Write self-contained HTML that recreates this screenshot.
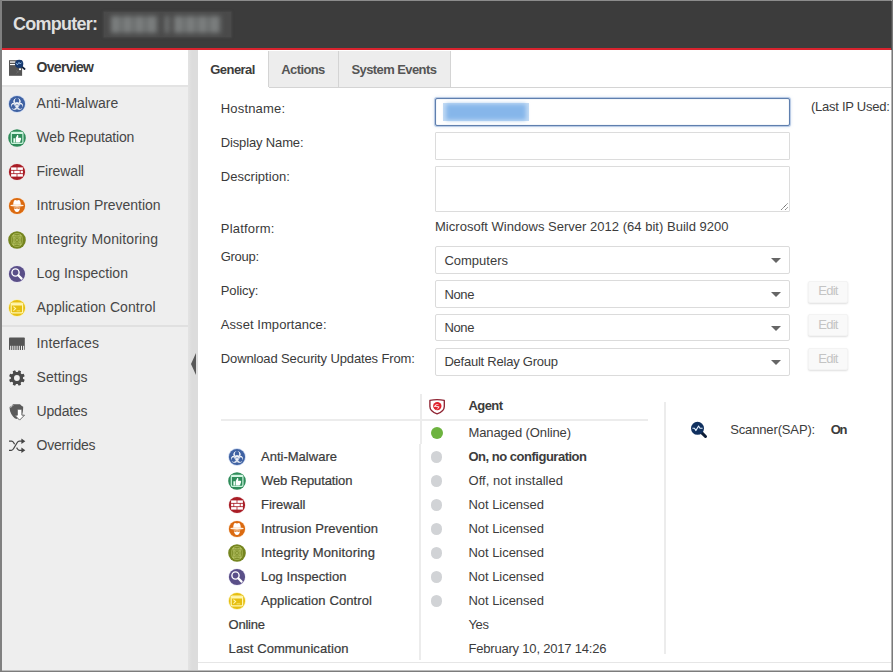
<!DOCTYPE html>
<html lang="en">
<head>
<meta charset="utf-8">
<title>Computer</title>
<style>
*{box-sizing:border-box;margin:0;padding:0}
html,body{width:893px;height:672px;overflow:hidden;background:#fff}
body{font-family:"Liberation Sans",sans-serif;position:relative;color:#333}
.a{position:absolute}
.t{position:absolute;white-space:nowrap;line-height:1;}
#hdr{left:0;top:0;width:893px;height:48px;background:#3c3c3c}
#red{left:0;top:48px;width:893px;height:2px;background:#d9232e}
#side{left:0;top:50px;width:188px;height:622px;background:#eee}
#ov{left:0;top:50px;width:188px;height:35px;background:#fff}
#ovl{left:0;top:85px;width:188px;height:2px;background:#e3e3e3}
#sep2{left:0;top:325px;width:188px;height:2px;background:#e0e0e0}
#split{left:188px;top:50px;width:10px;height:622px;background:linear-gradient(90deg,#e3e3e3 0,#dcdcdc 4px,#dcdcdc 100%)}
#tabline{left:198px;top:87px;width:695px;height:1px;background:#d4d4d4}
.tab{position:absolute;top:51px;height:36px;background:#ededed;border-right:1px solid #d4d4d4}
.inp{position:absolute;left:435px;width:355px;background:#fff;border:1px solid #dcdcdc;border-radius:1px}
.sel{position:absolute;left:435px;width:355px;height:27px;background:#fff;border:1px solid #dbdbdb;border-radius:2px}
.sel:after{content:"";position:absolute;right:8px;top:11px;border-left:5px solid transparent;border-right:5px solid transparent;border-top:5px solid #666}
.btn{position:absolute;left:808px;width:40px;height:22px;background:#f9f9f9;border:1px solid #f3f3f3;border-radius:2px;box-shadow:0 1px 2px rgba(0,0,0,.13)}
.dot{position:absolute;left:430.5px;width:11.5px;height:11.5px;border-radius:50%;background:#d1d3d6}
.ic{position:absolute}
#frame{left:0;top:0;width:893px;height:672px;border-left:2px solid #7a7a7a;border-right:2px solid #7a7a7a;border-bottom:2px solid #6e6e6e;border-top:1px solid #8a8a8a;pointer-events:none}
</style>
</head>
<body>
<div class="a" id="hdr"></div>
<div class="a" id="red"></div>
<div class="a" id="side"></div>
<div class="a" id="ov"></div>
<div class="a" id="ovl"></div>
<div class="a" id="sep2"></div>
<div class="a" id="split"></div>
<div class="a" style="left:190.8px;top:353px;width:0;height:0;border-top:11px solid transparent;border-bottom:11px solid transparent;border-right:5.5px solid #585858"></div>
<!-- blurred name -->
<div class="a" style="left:104px;top:12px;width:127px;height:25px;background:#4a4a4a;box-shadow:0 0 2px 1px #474747"></div>
<div class="a" style="left:111px;top:16px;width:112px;height:17px;filter:blur(2.4px)">
<div class="a" style="left:0;top:0;width:47px;height:17px;background:repeating-linear-gradient(90deg,#7b7e7e 0 9px,#626565 9px 12px)"></div>
<div class="a" style="left:54px;top:0;width:4px;height:17px;background:#787b7b"></div>
<div class="a" style="left:63px;top:0;width:47px;height:17px;background:repeating-linear-gradient(90deg,#7b7e7e 0 9px,#626565 9px 12px)"></div>
</div>
<!-- tabs -->
<div class="tab" style="left:269px;width:70px"></div>
<div class="tab" style="left:339px;width:112px"></div>
<div class="a" style="left:268px;top:51px;width:1px;height:36px;background:#d4d4d4"></div>
<div class="a" id="tabline"></div>
<div class="a" style="left:198px;top:87px;width:71px;height:1px;background:#fff"></div>
<!-- inputs -->
<div class="inp" style="top:98px;height:28px;border:1px solid #5f7fae;border-radius:2px;box-shadow:0 0 0 1px rgba(150,175,215,.55),0 0 3px 1px rgba(150,180,220,.35),inset 0 0 1px rgba(95,127,174,.6)"></div>
<div class="a" style="left:443px;top:103px;width:86px;height:18px;background:#c4dcf5"></div>
<div class="a" style="left:446px;top:104px;width:80px;height:16px;filter:blur(2px);background:#86b6ea"></div>
<div class="inp" style="top:132px;height:28px"></div>
<div class="inp" style="top:166px;height:46px"></div>
<svg class="a" style="left:779px;top:201px" width="9" height="9" viewBox="0 0 9 9"><path d="M2.3 8.700L8.800 2.200M6.300 8.700L8.800 6.200" stroke="#444" stroke-width=".95" stroke-dasharray="1.300 .550" fill="none"/></svg>
<div class="sel" style="top:246px;height:28px"></div>
<div class="sel" style="top:280px;height:28px"></div>
<div class="sel" style="top:314px;height:27px"></div>
<div class="sel" style="top:348px;height:28px"></div>
<div class="btn" style="top:281px"></div>
<div class="btn" style="top:314px"></div>
<div class="btn" style="top:348px"></div>
<!-- status table lines -->
<div class="a" style="left:221px;top:419px;width:427px;height:2px;background:#ececec"></div>
<div class="a" style="left:420px;top:394px;width:2px;height:50px;background:#ececec"></div><div class="a" style="left:419px;top:444px;width:2px;height:216px;background:#ececec"></div>
<div class="a" style="left:664px;top:402px;width:2px;height:252px;background:#ececec"></div>
<div class="a" style="left:198px;top:662px;width:695px;height:1px;background:#e6e6e6"></div>
<div class="dot" style="top:427.4px;left:430.8px;width:12px;height:12px;background:#6db33f"></div>
<div class="dot" style="top:451px"></div>
<div class="dot" style="top:475px"></div>
<div class="dot" style="top:499px"></div>
<div class="dot" style="top:523px"></div>
<div class="dot" style="top:547px"></div>
<div class="dot" style="top:571px"></div>
<div class="dot" style="top:595px"></div>
<svg class="ic" style="left:4px;top:54px" width="28" height="28" viewBox="4 54 28 28"><rect x="9" y="60.2" width="13.1" height="15.6" fill="#555"/><rect x="10" y="61.3" width="5.6" height="1.5" fill="#e9e9e9"/><rect x="10" y="64" width="5" height="1.1" fill="#fff"/><rect x="19" y="68.4" width="2" height="1.7" fill="#fff"/><path d="M16.2 70.5l2 1.6M16.2 73.5l3.5-2.6" stroke="#6a6a6a" stroke-width=".8"/><path d="M21.8 66.6L24.6 69" stroke="#15233c" stroke-width="1.8" stroke-linecap="round"/><circle cx="19.2" cy="63.9" r="4.1" fill="#173a70"/><path d="M16.2 63.2l1.2 1.6l1.6-2.4l1.2 1.6l1.4-1.4" fill="none" stroke="#9cc8f5" stroke-width=".9"/></svg>
<svg class="ic" style="left:6.9px;top:93.5px" width="20" height="20" viewBox="-10 -10 20 20"><circle r="8.9" fill="#d3def3"/><circle r="8.1" fill="#3f62a3"/><clipPath id="c1"><circle r="8.1"/></clipPath><g clip-path="url(#c1)"><circle cx="0.00" cy="-1.99" r="3.67" fill="#fff"/><circle cx="2.33" cy="2.05" r="3.67" fill="#fff"/><circle cx="-2.33" cy="2.05" r="3.67" fill="#fff"/><circle cx="0.00" cy="-3.10" r="2.35" fill="#3f62a3"/><path d="M0.00 -3.22L0.00 -6.65" stroke="#3f62a3" stroke-width="1.59"/><circle cx="3.29" cy="2.60" r="2.35" fill="#3f62a3"/><path d="M3.39 2.66L6.37 4.37" stroke="#3f62a3" stroke-width="1.59"/><circle cx="-3.29" cy="2.60" r="2.35" fill="#3f62a3"/><path d="M-3.39 2.66L-6.37 4.37" stroke="#3f62a3" stroke-width="1.59"/><path d="M0.00 1.93L0.00 8.05" stroke="#3f62a3" stroke-width="0.45"/><path d="M1.06 0.09L6.37 -2.97" stroke="#3f62a3" stroke-width="0.45"/><path d="M-1.06 0.09L-6.37 -2.98" stroke="#3f62a3" stroke-width="0.45"/><circle cy="0.7" r="2.21" fill="none" stroke="#fff" stroke-width="0.88"/><circle cy="0.7" r="0.69" fill="#3f62a3"/></g></svg>
<svg class="ic" style="left:6.9px;top:128.0px" width="20" height="20" viewBox="-10 -10 20 20"><circle r="8.8" fill="#2f8c5a"/><rect x="-5.7" y="-5.6" width="11.6" height="11" rx="1.3" fill="none" stroke="#c9f3dc" stroke-width="1.2"/><rect x="-5.7" y="-5.8" width="11.6" height="1.700" rx=".6" fill="#d4f7e3"/><path d="M-3.6 0.2h1.6v4.2h-1.6z" fill="#e9fff2"/><path d="M-1.4 0.2L0.3 -2.9c0.9 0 1.3 0.7 1.0 1.6L1.0 -0.2h2.2c0.8 0 1.1 0.6 0.9 1.2L3.2 3.7c-0.2 0.5-0.6 0.7-1.1 0.7H-1.4z" fill="#fff"/></svg>
<svg class="ic" style="left:6.9px;top:162.0px" width="20" height="20" viewBox="-10 -10 20 20"><circle r="8.7" fill="#f3d9db" opacity=".6"/><circle r="8.1" fill="#a91d26"/><g fill="#fff"><rect x="-5.9" y="-4.6" width="5.5" height="2.5"/><rect x="0.4" y="-4.6" width="5.5" height="2.5"/><rect x="-5.9" y="-1.25" width="2.3" height="2.5"/><rect x="-2.8" y="-1.25" width="5.6" height="2.5"/><rect x="3.6" y="-1.25" width="2.3" height="2.5"/><rect x="-5.9" y="2.1" width="5.5" height="2.5"/><rect x="0.4" y="2.1" width="5.5" height="2.5"/></g></svg>
<svg class="ic" style="left:6.9px;top:196.0px" width="20" height="20" viewBox="-10 -10 20 20"><circle r="8.7" fill="#fde3c8" opacity=".7"/><circle r="8.1" fill="#db6a10"/><path d="M-3.8 -1.2c0.100-2.800 0.900-4.700 2.000-4.700c0.700 0 1.100 0.500 1.800 0.500s1.100-0.500 1.800-0.500c1.100 0 1.900 1.900 2.000 4.700z" fill="#fff"/><ellipse cx="0" cy="-0.500" rx="6.700" ry="1.150" fill="#fff3e4"/><path d="M-3.2 1.000h6.400c0 2.900-1.300 5.000-3.200 5.000s-3.200-2.100-3.200-5.000z" fill="#fff"/><path d="M-3.1 1.300h6.200v1.300c-1.000 0.500-2.000 0.500-3.100 0c-1.100 0.500-2.100 0.500-3.100 0z" fill="#db6a10" opacity=".8"/></svg>
<svg class="ic" style="left:6.9px;top:230.0px" width="20" height="20" viewBox="-10 -10 20 20"><circle r="8.8" fill="#75851f"/><g fill="none" stroke="#ccd97c" stroke-width="0.6"><rect x="-5.200" y="-6.300" width="10.400" height="12.600" rx="4.200" ry="4.600"/><path d="M-4.0 -5.0Q0 -3.3 4.0 -5.0Q2.3 0 4.0 5.0Q0 3.3 -4.0 5.0Q-2.3 0 -4.0 -5.0z"/><path d="M-2.5 -3.3Q0 -2.3 2.5 -3.3Q1.5 0 2.5 3.3Q0 2.3 -2.5 3.3Q-1.5 0 -2.5 -3.3z"/></g><path d="M-1.800 -2.400L1.800 2.400M1.800 -2.400L-1.800 2.400" stroke="#ccd97c" stroke-width=".55"/></svg>
<svg class="ic" style="left:6.9px;top:264.0px" width="20" height="20" viewBox="-10 -10 20 20"><circle r="8.7" fill="#e4e0f3" opacity=".7"/><circle r="8.1" fill="#5a4f88"/><circle cx="-1.5" cy="-1.5" r="3.6" fill="none" stroke="#fff" stroke-width="1.4"/><path d="M1.3 1.3L4.6 4.6" stroke="#fff" stroke-width="2.2" stroke-linecap="round"/></svg>
<svg class="ic" style="left:6.9px;top:298.0px" width="20" height="20" viewBox="-10 -10 20 20"><circle r="8.8" fill="#fbf0a8" opacity=".8"/><circle r="8.1" fill="#e6be10"/><rect x="-5.8" y="-4.8" width="11.4" height="9.6" rx="1" fill="none" stroke="#fff6b0" stroke-width="1.2"/><rect x="-5.8" y="-4.8" width="11.4" height="2.2" rx=".8" fill="#fff6b0"/><path d="M-3.6 -1.3L-1.4 0.6L-3.6 2.6" fill="none" stroke="#fff6b0" stroke-width="1.1"/><path d="M-0.4 2.8H3.2" stroke="#f7e36a" stroke-width="1"/></svg>
<svg class="ic" style="left:4px;top:330px" width="28" height="28" viewBox="4 330 28 28"><rect x="9" y="337.5" width="15.8" height="12.5" rx=".8" fill="#555"/><rect x="10.2" y="345.8" width="1" height="4.2" fill="#f4f4f4"/><rect x="12.3" y="345.8" width="1" height="4.2" fill="#f4f4f4"/><rect x="14.4" y="345.8" width="1" height="4.2" fill="#f4f4f4"/><rect x="16.6" y="345.8" width="1" height="4.2" fill="#f4f4f4"/><rect x="18.8" y="345.8" width="1" height="4.2" fill="#f4f4f4"/><rect x="21.0" y="345.8" width="1" height="4.2" fill="#f4f4f4"/><rect x="23.1" y="345.8" width="1" height="4.2" fill="#f4f4f4"/></svg>
<svg class="ic" style="left:4px;top:364px" width="28" height="28" viewBox="4 364 28 28"><path d="M22.95 378.80L24.68 379.87L23.72 382.18L21.74 381.71L20.61 382.84L21.08 384.82L18.77 385.78L17.70 384.05L16.10 384.05L15.03 385.78L12.72 384.82L13.19 382.84L12.06 381.71L10.08 382.18L9.12 379.87L10.85 378.80L10.85 377.20L9.12 376.13L10.08 373.82L12.06 374.29L13.19 373.16L12.72 371.18L15.03 370.22L16.10 371.95L17.70 371.95L18.77 370.22L21.08 371.18L20.61 373.16L21.74 374.29L23.72 373.82L24.68 376.13L22.95 377.20z" fill="#4a4a4a"/><circle cx="16.9" cy="378" r="5.8" fill="#4a4a4a"/><circle cx="16.9" cy="378" r="2.9" fill="#f2f2f2"/></svg>
<svg class="ic" style="left:4px;top:398px" width="28" height="28" viewBox="4 398 28 28"><path d="M13 404.2h7c1 1.2 2 2 3.2 2.6c0 4-0.6 7-2.4 9.2l-4.3 3c-2.2-0.8-5-3.6-6.3-7.6c-0.5-1.6-0.6-3-0.6-4.4c1.4-0.5 2.4-1.4 3.4-2.8z" fill="#5a5a5a"/><path d="M10.3 407.5c1.3-0.6 2.2-1.4 3-2.4" stroke="#ddd" stroke-width=".8" fill="none"/><path d="M17.3 409.2h4.6v6h2.6l-4.9 4.9l-4.9-4.9h2.6z" fill="#fff" stroke="#5a5a5a" stroke-width=".9"/></svg>
<svg class="ic" style="left:4px;top:432px" width="28" height="28" viewBox="4 432 28 28"><g fill="none" stroke="#444" stroke-width="1.25"><path d="M9 441.2h2.6c1 0 1.5 0.5 2.1 1.5l0.9 1.5"/><path d="M16.6 447.6l0.9 1.4c0.6 0.9 1.1 1.3 2.1 1.3h2.4"/><path d="M9 450.3h2.3c1 0 1.6-0.5 2.2-1.5l3.6-6.1c0.6-1 1.2-1.5 2.2-1.5h2.7"/></g><path d="M21.4 438.4l3.9 2.8l-3.9 2.8z" fill="#444"/><path d="M21.4 447.5l3.9 2.8l-3.9 2.8z" fill="#444"/></svg>
<svg class="ic" style="left:423px;top:392px" width="28" height="28" viewBox="423 392 28 28"><path d="M429.9 400.4c4.600-1.000 9.800-1.000 14.400 0v6.000c0 3.600-3.000 5.900-7.200 7.400c-4.200-1.500-7.200-3.800-7.200-7.400z" fill="#fff" stroke="#8f2433" stroke-width="1.35" stroke-linejoin="round"/><circle cx="437.3" cy="406.1" r="4.2" fill="#e0212c"/><path d="M433.9 406.9c0.700-2.300 3.000-3.400 5.200-2.600c-1.700 0.100-2.900 0.900-3.500 2.100c1.400-0.700 2.900-0.600 3.900 0.200c-0.300 1.700-1.800 2.900-3.600 2.900c1.300-0.500 2.000-1.300 2.200-2.200c-1.500-0.400-2.900-0.300-4.200-0.400z" fill="#fff" opacity=".85"/></svg>
<svg class="ic" style="left:685px;top:416px" width="28" height="28" viewBox="685 416 28 28"><path d="M701.6 432.600L705.5 436.5" stroke="#0d1d36" stroke-width="3" stroke-linecap="round"/><circle cx="697.5" cy="428.3" r="6.5" fill="#10305f"/><path d="M692.4 428.300h2.100l1.300 2.300l2.800-4.600l1.400 2.300h2.600" fill="none" stroke="#e4f1ff" stroke-width="1.1" stroke-linejoin="round"/></svg>
<svg class="ic" style="left:227.0px;top:446.6px" width="20" height="20" viewBox="-10 -10 20 20"><circle r="8.9" fill="#d3def3"/><circle r="8.1" fill="#3f62a3"/><clipPath id="c8"><circle r="8.1"/></clipPath><g clip-path="url(#c8)"><circle cx="0.00" cy="-1.99" r="3.67" fill="#fff"/><circle cx="2.33" cy="2.05" r="3.67" fill="#fff"/><circle cx="-2.33" cy="2.05" r="3.67" fill="#fff"/><circle cx="0.00" cy="-3.10" r="2.35" fill="#3f62a3"/><path d="M0.00 -3.22L0.00 -6.65" stroke="#3f62a3" stroke-width="1.59"/><circle cx="3.29" cy="2.60" r="2.35" fill="#3f62a3"/><path d="M3.39 2.66L6.37 4.37" stroke="#3f62a3" stroke-width="1.59"/><circle cx="-3.29" cy="2.60" r="2.35" fill="#3f62a3"/><path d="M-3.39 2.66L-6.37 4.37" stroke="#3f62a3" stroke-width="1.59"/><path d="M0.00 1.93L0.00 8.05" stroke="#3f62a3" stroke-width="0.45"/><path d="M1.06 0.09L6.37 -2.97" stroke="#3f62a3" stroke-width="0.45"/><path d="M-1.06 0.09L-6.37 -2.98" stroke="#3f62a3" stroke-width="0.45"/><circle cy="0.7" r="2.21" fill="none" stroke="#fff" stroke-width="0.88"/><circle cy="0.7" r="0.69" fill="#3f62a3"/></g></svg>
<svg class="ic" style="left:227.0px;top:470.6px" width="20" height="20" viewBox="-10 -10 20 20"><circle r="8.8" fill="#2f8c5a"/><rect x="-5.7" y="-5.6" width="11.6" height="11" rx="1.3" fill="none" stroke="#c9f3dc" stroke-width="1.2"/><rect x="-5.7" y="-5.8" width="11.6" height="1.700" rx=".6" fill="#d4f7e3"/><path d="M-3.6 0.2h1.6v4.2h-1.6z" fill="#e9fff2"/><path d="M-1.4 0.2L0.3 -2.9c0.9 0 1.3 0.7 1.0 1.6L1.0 -0.2h2.2c0.8 0 1.1 0.6 0.9 1.2L3.2 3.7c-0.2 0.5-0.6 0.7-1.1 0.7H-1.4z" fill="#fff"/></svg>
<svg class="ic" style="left:227.0px;top:494.6px" width="20" height="20" viewBox="-10 -10 20 20"><circle r="8.7" fill="#f3d9db" opacity=".6"/><circle r="8.1" fill="#a91d26"/><g fill="#fff"><rect x="-5.9" y="-4.6" width="5.5" height="2.5"/><rect x="0.4" y="-4.6" width="5.5" height="2.5"/><rect x="-5.9" y="-1.25" width="2.3" height="2.5"/><rect x="-2.8" y="-1.25" width="5.6" height="2.5"/><rect x="3.6" y="-1.25" width="2.3" height="2.5"/><rect x="-5.9" y="2.1" width="5.5" height="2.5"/><rect x="0.4" y="2.1" width="5.5" height="2.5"/></g></svg>
<svg class="ic" style="left:227.0px;top:518.6px" width="20" height="20" viewBox="-10 -10 20 20"><circle r="8.7" fill="#fde3c8" opacity=".7"/><circle r="8.1" fill="#db6a10"/><path d="M-3.8 -1.2c0.100-2.800 0.900-4.700 2.000-4.700c0.700 0 1.100 0.500 1.800 0.500s1.100-0.500 1.800-0.500c1.100 0 1.900 1.900 2.000 4.700z" fill="#fff"/><ellipse cx="0" cy="-0.500" rx="6.700" ry="1.150" fill="#fff3e4"/><path d="M-3.2 1.000h6.400c0 2.900-1.300 5.000-3.200 5.000s-3.200-2.100-3.200-5.000z" fill="#fff"/><path d="M-3.1 1.300h6.200v1.300c-1.000 0.500-2.000 0.500-3.100 0c-1.100 0.500-2.100 0.500-3.100 0z" fill="#db6a10" opacity=".8"/></svg>
<svg class="ic" style="left:227.0px;top:542.6px" width="20" height="20" viewBox="-10 -10 20 20"><circle r="8.8" fill="#75851f"/><g fill="none" stroke="#ccd97c" stroke-width="0.6"><rect x="-5.200" y="-6.300" width="10.400" height="12.600" rx="4.200" ry="4.600"/><path d="M-4.0 -5.0Q0 -3.3 4.0 -5.0Q2.3 0 4.0 5.0Q0 3.3 -4.0 5.0Q-2.3 0 -4.0 -5.0z"/><path d="M-2.5 -3.3Q0 -2.3 2.5 -3.3Q1.5 0 2.5 3.3Q0 2.3 -2.5 3.3Q-1.5 0 -2.5 -3.3z"/></g><path d="M-1.800 -2.400L1.800 2.400M1.800 -2.400L-1.800 2.400" stroke="#ccd97c" stroke-width=".55"/></svg>
<svg class="ic" style="left:227.0px;top:566.6px" width="20" height="20" viewBox="-10 -10 20 20"><circle r="8.7" fill="#e4e0f3" opacity=".7"/><circle r="8.1" fill="#5a4f88"/><circle cx="-1.5" cy="-1.5" r="3.6" fill="none" stroke="#fff" stroke-width="1.4"/><path d="M1.3 1.3L4.6 4.6" stroke="#fff" stroke-width="2.2" stroke-linecap="round"/></svg>
<svg class="ic" style="left:227.0px;top:590.6px" width="20" height="20" viewBox="-10 -10 20 20"><circle r="8.8" fill="#fbf0a8" opacity=".8"/><circle r="8.1" fill="#e6be10"/><rect x="-5.8" y="-4.8" width="11.4" height="9.6" rx="1" fill="none" stroke="#fff6b0" stroke-width="1.2"/><rect x="-5.8" y="-4.8" width="11.4" height="2.2" rx=".8" fill="#fff6b0"/><path d="M-3.6 -1.3L-1.4 0.6L-3.6 2.6" fill="none" stroke="#fff6b0" stroke-width="1.1"/><path d="M-0.4 2.8H3.2" stroke="#f7e36a" stroke-width="1"/></svg>
<div class="t" style="left:13.0px;top:14.8px;font-size:18px;font-weight:700;color:#dfdfdf;letter-spacing:-0.75px;">Computer:</div>
<div class="t" style="left:36.6px;top:60.1px;font-size:14px;font-weight:700;color:#3a3a3a;letter-spacing:-0.70px;">Overview</div>
<div class="t" style="left:36.6px;top:96.1px;font-size:14px;font-weight:400;color:#474747;letter-spacing:-0.00px;">Anti-Malware</div>
<div class="t" style="left:36.6px;top:130.1px;font-size:14px;font-weight:400;color:#474747;letter-spacing:-0.18px;">Web Reputation</div>
<div class="t" style="left:36.6px;top:164.1px;font-size:14px;font-weight:400;color:#474747;letter-spacing:-0.12px;">Firewall</div>
<div class="t" style="left:36.6px;top:198.1px;font-size:14px;font-weight:400;color:#474747;letter-spacing:-0.03px;">Intrusion Prevention</div>
<div class="t" style="left:36.6px;top:232.1px;font-size:14px;font-weight:400;color:#474747;letter-spacing:0.12px;">Integrity Monitoring</div>
<div class="t" style="left:36.6px;top:266.1px;font-size:14px;font-weight:400;color:#474747;letter-spacing:0.02px;">Log Inspection</div>
<div class="t" style="left:36.6px;top:300.1px;font-size:14px;font-weight:400;color:#474747;letter-spacing:0.08px;">Application Control</div>
<div class="t" style="left:36.6px;top:336.1px;font-size:14px;font-weight:400;color:#474747;letter-spacing:0.10px;">Interfaces</div>
<div class="t" style="left:36.6px;top:370.1px;font-size:14px;font-weight:400;color:#474747;letter-spacing:0.04px;">Settings</div>
<div class="t" style="left:36.6px;top:404.1px;font-size:14px;font-weight:400;color:#474747;letter-spacing:-0.21px;">Updates</div>
<div class="t" style="left:36.6px;top:438.1px;font-size:14px;font-weight:400;color:#474747;letter-spacing:-0.22px;">Overrides</div>
<div class="t" style="left:210.3px;top:63.0px;font-size:13px;font-weight:700;color:#3c3c3c;letter-spacing:-0.55px;">General</div>
<div class="t" style="left:281.3px;top:63.0px;font-size:13px;font-weight:700;color:#555;letter-spacing:-0.61px;">Actions</div>
<div class="t" style="left:351.5px;top:63.0px;font-size:13px;font-weight:700;color:#555;letter-spacing:-0.59px;">System Events</div>
<div class="t" style="left:220.8px;top:102.0px;font-size:13px;font-weight:400;color:#3a3a3a;letter-spacing:0.17px;">Hostname:</div>
<div class="t" style="left:220.8px;top:136.0px;font-size:13px;font-weight:400;color:#3a3a3a;letter-spacing:-0.15px;">Display Name:</div>
<div class="t" style="left:220.8px;top:170.0px;font-size:13px;font-weight:400;color:#3a3a3a;letter-spacing:0.03px;">Description:</div>
<div class="t" style="left:220.8px;top:222.0px;font-size:13px;font-weight:400;color:#3a3a3a;letter-spacing:0.19px;">Platform:</div>
<div class="t" style="left:220.8px;top:250.0px;font-size:13px;font-weight:400;color:#3a3a3a;letter-spacing:-0.31px;">Group:</div>
<div class="t" style="left:220.8px;top:284.0px;font-size:13px;font-weight:400;color:#3a3a3a;letter-spacing:-0.10px;">Policy:</div>
<div class="t" style="left:220.8px;top:318.0px;font-size:13px;font-weight:400;color:#3a3a3a;letter-spacing:0.06px;">Asset Importance:</div>
<div class="t" style="left:220.8px;top:352.0px;font-size:13px;font-weight:400;color:#3a3a3a;letter-spacing:-0.13px;">Download Security Updates From:</div>
<div class="t" style="left:435.0px;top:219.5px;font-size:13px;font-weight:400;color:#3c3c3c;letter-spacing:0.02px;">Microsoft Windows Server 2012 (64 bit) Build 9200</div>
<div class="t" style="left:811.0px;top:100.0px;font-size:13px;font-weight:400;color:#3c3c3c;letter-spacing:-0.26px;">(Last IP Used:</div>
<div class="t" style="left:444.4px;top:253.5px;font-size:13px;font-weight:400;color:#3c3c3c;letter-spacing:0.00px;">Computers</div>
<div class="t" style="left:444.4px;top:287.5px;font-size:13px;font-weight:400;color:#3c3c3c;letter-spacing:-0.33px;">None</div>
<div class="t" style="left:444.4px;top:320.5px;font-size:13px;font-weight:400;color:#3c3c3c;letter-spacing:-0.33px;">None</div>
<div class="t" style="left:444.4px;top:354.5px;font-size:13px;font-weight:400;color:#3c3c3c;letter-spacing:-0.23px;">Default Relay Group</div>
<div class="t" style="left:818.3px;top:284.0px;font-size:13px;font-weight:400;color:#c4c4c4;letter-spacing:-0.77px;">Edit</div>
<div class="t" style="left:818.3px;top:317.5px;font-size:13px;font-weight:400;color:#c4c4c4;letter-spacing:-0.77px;">Edit</div>
<div class="t" style="left:818.3px;top:351.5px;font-size:13px;font-weight:400;color:#c4c4c4;letter-spacing:-0.77px;">Edit</div>
<div class="t" style="left:468.5px;top:399.0px;font-size:13px;font-weight:700;color:#3c3c3c;letter-spacing:-0.59px;">Agent</div>
<div class="t" style="left:468.5px;top:426.2px;font-size:13px;font-weight:400;color:#3c3c3c;letter-spacing:-0.10px;">Managed (Online)</div>
<div class="t" style="left:261.0px;top:450.0px;font-size:13px;font-weight:400;color:#3c3c3c;letter-spacing:0.01px;-webkit-text-stroke:0.22px #3a3a3a;">Anti-Malware</div>
<div class="t" style="left:468.5px;top:450.0px;font-size:13px;font-weight:700;color:#3c3c3c;letter-spacing:-0.49px;">On, no configuration</div>
<div class="t" style="left:261.0px;top:474.0px;font-size:13px;font-weight:400;color:#3c3c3c;letter-spacing:-0.12px;-webkit-text-stroke:0.22px #3a3a3a;">Web Reputation</div>
<div class="t" style="left:468.5px;top:474.0px;font-size:13px;font-weight:400;color:#3c3c3c;letter-spacing:0.05px;">Off, not installed</div>
<div class="t" style="left:261.0px;top:498.0px;font-size:13px;font-weight:400;color:#3c3c3c;letter-spacing:-0.04px;-webkit-text-stroke:0.22px #3a3a3a;">Firewall</div>
<div class="t" style="left:468.5px;top:498.0px;font-size:13px;font-weight:400;color:#3c3c3c;letter-spacing:-0.04px;">Not Licensed</div>
<div class="t" style="left:261.0px;top:522.0px;font-size:13px;font-weight:400;color:#3c3c3c;letter-spacing:0.07px;-webkit-text-stroke:0.22px #3a3a3a;">Intrusion Prevention</div>
<div class="t" style="left:468.5px;top:522.0px;font-size:13px;font-weight:400;color:#3c3c3c;letter-spacing:-0.04px;">Not Licensed</div>
<div class="t" style="left:261.0px;top:546.0px;font-size:13px;font-weight:400;color:#3c3c3c;letter-spacing:0.18px;-webkit-text-stroke:0.22px #3a3a3a;">Integrity Monitoring</div>
<div class="t" style="left:468.5px;top:546.0px;font-size:13px;font-weight:400;color:#3c3c3c;letter-spacing:-0.04px;">Not Licensed</div>
<div class="t" style="left:261.0px;top:570.0px;font-size:13px;font-weight:400;color:#3c3c3c;letter-spacing:0.07px;-webkit-text-stroke:0.22px #3a3a3a;">Log Inspection</div>
<div class="t" style="left:468.5px;top:570.0px;font-size:13px;font-weight:400;color:#3c3c3c;letter-spacing:-0.04px;">Not Licensed</div>
<div class="t" style="left:261.0px;top:594.0px;font-size:13px;font-weight:400;color:#3c3c3c;letter-spacing:0.10px;-webkit-text-stroke:0.22px #3a3a3a;">Application Control</div>
<div class="t" style="left:468.5px;top:594.0px;font-size:13px;font-weight:400;color:#3c3c3c;letter-spacing:-0.04px;">Not Licensed</div>
<div class="t" style="left:228.6px;top:618.0px;font-size:13px;font-weight:400;color:#3c3c3c;letter-spacing:-0.24px;-webkit-text-stroke:0.22px #3a3a3a;">Online</div>
<div class="t" style="left:228.6px;top:642.0px;font-size:13px;font-weight:400;color:#3c3c3c;letter-spacing:0.08px;-webkit-text-stroke:0.22px #3a3a3a;">Last Communication</div>
<div class="t" style="left:468.5px;top:618.0px;font-size:13px;font-weight:400;color:#3c3c3c;letter-spacing:-0.36px;">Yes</div>
<div class="t" style="left:468.5px;top:642.0px;font-size:13px;font-weight:400;color:#3c3c3c;letter-spacing:-0.20px;">February 10, 2017 14:26</div>
<div class="t" style="left:730.2px;top:422.6px;font-size:13px;font-weight:400;color:#3c3c3c;letter-spacing:-0.14px;">Scanner(SAP):</div>
<div class="t" style="left:830.7px;top:422.6px;font-size:13px;font-weight:700;color:#3c3c3c;letter-spacing:-1.20px;">On</div>
<div class="a" style="left:0;top:0;width:893px;height:1px;background:#8c8c8c"></div>
<div class="a" style="left:0;top:0;width:2px;height:672px;background:#808080"></div>
<div class="a" style="left:891px;top:0;width:1px;height:672px;background:#b4b4b4"></div>
<div class="a" style="left:892px;top:0;width:1px;height:672px;background:#7a7a7a"></div>
<div class="a" style="left:891px;top:1px;width:1px;height:49px;background:#525252"></div>
<div class="a" style="left:2px;top:670px;width:890px;height:1px;background:#bcbcbc"></div>
<div class="a" style="left:0;top:671px;width:893px;height:1px;background:#7c7c7c"></div>
</body>
</html>
